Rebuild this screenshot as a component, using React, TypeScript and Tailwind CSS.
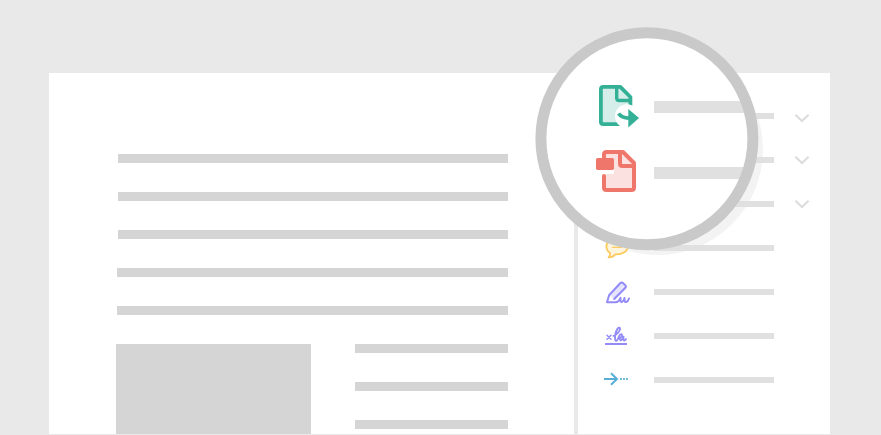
const BAR = "h-[9px] bg-[#d5d5d5]";

function Chevron({ className }: { className: string }) {
  return (
    <svg className={`ml-[20px] h-3 w-4 ${className}`} viewBox="0 0 16 12" fill="none" stroke="#dcdcdc" strokeWidth="2">
      <path d="M1.400 2.700 8 9l6.600-6.300" />
    </svg>
  );
}

function CommentIcon() {
  return (
    <svg className="h-7 w-7" viewBox="0 0 28 28" fill="none" stroke="#fccb60" strokeWidth="1.8" strokeLinejoin="round">
      <path
        d="M15.200 4C8.700 4 4.400 7.600 4.400 12.400c0 2.900 1.400 4.900 3.600 6.500.1 1.700-.3 3.200-1.400 4.400 3 .2 5.100-1 6.700-2.900 7.300.3 12.600-3.200 12.600-8.200C25.900 7.600 21.700 4 15.200 4Z"
        fill="#fff5dd"
      />
      <path d="M10 10h10M10 13.300h10" strokeWidth="1.200" />
    </svg>
  );
}

function PencilIcon() {
  return (
    <svg className="h-7 w-7" viewBox="0 0 28 28" fill="none" stroke="#938bf8" strokeWidth="2" strokeLinejoin="round" strokeLinecap="round">
      <path d="M7.200 17 18.200 5.200q1.500-1.400 3 0l2 1.900q1.400 1.400 0 2.900L12.200 21Z" fill="#e6e4fd" stroke="none" />
      <path d="M12.200 21 23.200 10q1.400-1.500 0-2.900l-2-1.900q-1.500-1.400-3 0L7.200 17 5 24.200h8.500c2.600 0 4-2 5-4.400v2.700c0 2.300 2.800 2.300 4-2.500v2.500c0 2.300 3 2.500 4.500-2" />
    </svg>
  );
}

function SignIcon() {
  return (
    <svg className="h-7 w-7" viewBox="0 0 28 28" fill="none" stroke="#938bf8" strokeWidth="2" strokeLinecap="round" strokeLinejoin="round">
      <path d="m5 13.300 4 4m0-4-4 4" strokeWidth="1.500" />
      <path d="M11.500 13.800c3.500-1.300 7.300-5.300 6.500-7.700-.8-1.500-3.600.8-4.500 5.400-.6 3.800-.8 7.300.9 7.300 1.700 0 2.100-5.300 3.900-6.300 1.400-.8 2.300.3 1.300 1.900-.9 1.400-1.900 1.900-1.700 2.800.3 1.900 2.800 1.100 3.600-2.400-.3 2.700.1 3.700 1 3.700.7 0 1.100-.5 1.500-1.300" strokeWidth="1.900" />
      <path d="M3 22h22" strokeLinecap="butt" />
    </svg>
  );
}

function ArrowIcon() {
  return (
    <svg className="-mt-px h-7 w-7" viewBox="0 0 28 28" fill="none" stroke="#5aaed6" strokeWidth="2">
      <path d="M2 14h13M9 8.200l6 5.800-6 5.800" />
      <path d="M18 14h8" strokeDasharray="2 1" strokeOpacity="0.85" />
    </svg>
  );
}

function ExportIcon() {
  return (
    <svg className="h-[46px] w-12 shrink-0" viewBox="0 0 48 46" fill="none" stroke="#33b095" strokeWidth="3.800" strokeLinejoin="round">
      <path d="M8 5h19.500l10 10V42H8Z" fill="#d6eee9" stroke="none" />
      <path d="M28 42.200H10.300q-2.400 0-2.400-2.400V7.300q0-2.400 2.400-2.400h17L37.400 15v9" />
      <path d="M23.700 5v11q0 2.500 2.500 2.500H37" strokeWidth="3.400" />
      <circle cx="34" cy="34.300" r="12" fill="white" stroke="none" />
      <path d="M25.600 31.500C28 35 31 36.300 37 36" />
      <path d="M35.300 27v18.500L46 36Z" fill="#33b095" stroke="none" />
    </svg>
  );
}

function PdfIcon() {
  return (
    <svg className="h-[46px] w-12 shrink-0" viewBox="0 0 48 46" fill="none" stroke="#ef766b" strokeWidth="4" strokeLinejoin="round">
      <path d="M11 12V6.500Q11 4 13.500 4H30l11 11v24.500q0 2.500-2.500 2.500h-25Q11 42 11 39.500Z" fill="#fbe2e0" />
      <path d="M27 4v11.500q0 2.500 2.500 2.500H41" />
      <path d="M8.500 21H21v3.500q0 1.500-1.500 1.500H13v5H8.500Z" fill="white" stroke="none" />
      <path d="M11 28v6" strokeLinecap="round" />
      <rect x="3" y="10" width="18" height="12" rx="1.800" fill="#ef766b" stroke="none" />
    </svg>
  );
}

function Lens() {
  return (
    <>
      <div className="absolute left-[540px] top-[32px] h-[214px] w-[214px] overflow-hidden rounded-full bg-white">
        <div className="flex flex-col gap-5 pl-[53px] pt-[50px]">
          <div className="flex h-[46px] items-start">
            <ExportIcon />
            <div className="ml-[13px] mt-[19px] h-3 w-[130px] shrink-0 bg-[#e0e0e0]" />
          </div>
          <div className="flex h-[46px] items-start">
            <PdfIcon />
            <div className="ml-[13px] mt-[19px] h-3 w-[130px] shrink-0 bg-[#e0e0e0]" />
          </div>
        </div>
      </div>
      <div className="absolute left-[535px] top-[27px] h-[223px] w-[223px] translate-x-[0.4px] translate-y-[0.3px] rounded-full border-[11px] border-[#c9c9c9]" />
    </>
  );
}

const tools = [null, null, null, CommentIcon, PencilIcon, SignIcon, ArrowIcon];

export default function App() {
  return (
    <div className="relative h-[435px] w-[881px] overflow-hidden bg-[#e9e9e9] pl-[49px] pt-[73px]">
      <div className="relative flex h-[361px] w-[781px] bg-white">
        <div className="absolute left-[503px] top-[-29px] h-[211px] w-[211px] rounded-full bg-[#f3f3f3]" />
        <main className="h-full w-[525px] pt-[81px]">
          <div className="flex flex-col gap-[29px] pl-[68px]">
            <div className={`${BAR} ml-px w-[390px]`} />
            <div className={`${BAR} ml-px w-[390px]`} />
            <div className={`${BAR} ml-px w-[390px]`} />
            <div className={`${BAR} w-[391px]`} />
            <div className={`${BAR} w-[391px]`} />
          </div>
          <div className="mt-[29px] flex pl-[67px]">
            <div className="h-[90px] w-[195px] bg-[#d5d5d5]" />
            <div className="ml-[44px] flex flex-col gap-[29px]">
              <div className={`${BAR} w-[153px]`} />
              <div className={`${BAR} w-[153px]`} />
              <div className={`${BAR} w-[153px]`} />
            </div>
          </div>
        </main>
        <aside className="relative w-[256px] border-l-4 border-[#e9e9e9] pl-[24px] pt-[21px]">
          {tools.map((Icon, i) => (
            <div key={i} className="flex h-11 items-center">
              <div className="h-7 w-7">{Icon && <Icon />}</div>
              <div className="ml-[24px] h-[6px] w-[120px] bg-[#e0e0e0]" />
              {i < 3 && <Chevron className={i === 0 ? "mt-1" : "mt-0"} />}
            </div>
          ))}
        </aside>
      </div>
      <Lens />
    </div>
  );
}
